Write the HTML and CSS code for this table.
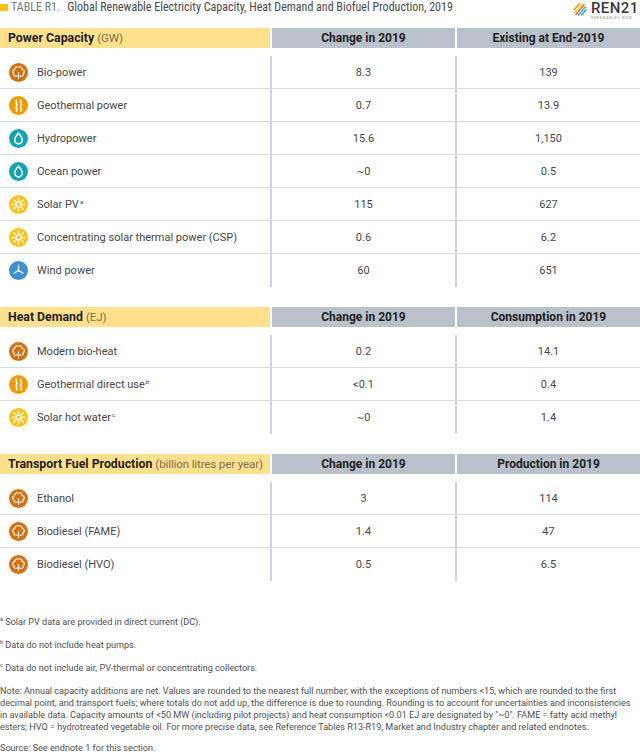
FILE: index.html
```html
<!DOCTYPE html>
<html lang="en">
<head>
<meta charset="utf-8">
<title>Table R1</title>
<link rel="stylesheet" href="styles.css">
</head>
<body>
<svg class="sprite" aria-hidden="true">
  <symbol id="i-bio" viewBox="0 0 20 20">
    <circle cx="10" cy="10" r="10" fill="currentColor"/>
    <path d="M8.6 13.6C6.6 14.7 4.3 13.2 5.2 11.2C3.2 10.5 3.3 7.2 6 7.1C5.9 4.6 8.3 3.5 10 4.2C11.7 3.5 14.1 4.6 14 7.1C16.7 7.2 16.8 10.5 14.8 11.2C15.7 13.2 13.4 14.7 11.4 13.6M10 16.6V10" fill="none" stroke="#fff" stroke-width="1.2" stroke-linecap="round" stroke-linejoin="round"/>
  </symbol>
  <symbol id="i-geo" viewBox="0 0 20 20">
    <circle cx="10" cy="10" r="10" fill="currentColor"/>
    <path d="M7.8 4.4C5.6 6.8 10 7.9 7.8 10.2C5.6 12.5 10 13.5 7.8 15.8M12.6 4.4C10.4 6.8 14.8 7.9 12.6 10.2C10.4 12.5 14.8 13.5 12.6 15.8" fill="none" stroke="#fff" stroke-width="1.7" stroke-linecap="round"/>
  </symbol>
  <symbol id="i-drop" viewBox="0 0 20 20">
    <circle cx="10" cy="10" r="10" fill="currentColor"/>
    <path d="M10 4.2C10 4.2 6 9 6 11.7A4 4 0 0 0 14 11.7C14 9 10 4.2 10 4.2Z" fill="none" stroke="#fff" stroke-width="1.6" stroke-linejoin="round"/>
  </symbol>
  <symbol id="i-sun" viewBox="0 0 20 20">
    <circle cx="10" cy="10" r="10" fill="currentColor"/>
    <circle cx="10" cy="10" r="2.6" fill="none" stroke="#fff" stroke-width="1.6"/>
    <path d="M10 3.3V5.4M10 14.6V16.7M3.3 10H5.4M14.6 10H16.7M13.25 6.75L14.75 5.25M6.75 6.75L5.25 5.25M13.25 13.25L14.75 14.75M6.75 13.25L5.25 14.75" stroke="#fff" stroke-width="1.7" stroke-linecap="round"/>
  </symbol>
  <symbol id="i-wind" viewBox="0 0 20 20">
    <circle cx="10" cy="10" r="10" fill="currentColor"/>
    <g fill="#fff">
      <path d="M10 10C8.9 8 9.1 5.3 10 3.2C10.9 5.3 11.1 8 10 10Z"/>
      <path d="M10 10C8.9 8 9.1 5.3 10 3.2C10.9 5.3 11.1 8 10 10Z" transform="rotate(120 10 10)"/>
      <path d="M10 10C8.9 8 9.1 5.3 10 3.2C10.9 5.3 11.1 8 10 10Z" transform="rotate(240 10 10)"/>
      <circle cx="10" cy="10" r="1.3"/>
    </g>
  </symbol>
</svg>

<header class="top">
  <div class="title">
    <span class="sq"></span>
    <span class="tlabel">TABLE R1.</span>
    <span class="ttext">Global Renewable Electricity Capacity, Heat Demand and Biofuel Production, 2019</span>
  </div>
  <div class="logo">
    <svg class="logo-mark" viewBox="0 0 14 14" aria-hidden="true">
      <path d="M1 8L6 2" stroke="#f39200" stroke-width="1.3" stroke-linecap="round"/>
      <path d="M1.5 11L9 2.5" stroke="#fcc30b" stroke-width="1.3" stroke-linecap="round" stroke-dasharray="3 1.2"/>
      <path d="M3 12.5L11 3" stroke="#e94e1b" stroke-width="1.3" stroke-linecap="round" stroke-dasharray="2.5 1.2"/>
      <path d="M5.5 13L12.5 4.8" stroke="#3b8fd5" stroke-width="1.3" stroke-linecap="round" stroke-dasharray="3 1.2"/>
      <path d="M8.5 13L13 7.8" stroke="#1aa3b4" stroke-width="1.3" stroke-linecap="round"/>
    </svg>
    <div class="brand">
      <span class="ren">REN21</span>
      <span class="now">RENEWABLES NOW</span>
    </div>
  </div>
</header>

<section class="tbl">
  <div class="thead">
    <div class="th th-main"><b>Power Capacity</b> <span class="unit">(GW)</span></div>
    <div class="th">Change in 2019</div>
    <div class="th">Existing at End-2019</div>
  </div>
  <div class="tbody">
    <div class="row"><div class="cell name"><svg class="ic bio"><use href="#i-bio"/></svg><span>Bio-power</span></div><div class="cell num">8.3</div><div class="cell num">139</div></div>
    <div class="row"><div class="cell name"><svg class="ic geo"><use href="#i-geo"/></svg><span>Geothermal power</span></div><div class="cell num">0.7</div><div class="cell num">13.9</div></div>
    <div class="row"><div class="cell name"><svg class="ic hydro"><use href="#i-drop"/></svg><span>Hydropower</span></div><div class="cell num">15.6</div><div class="cell num">1,150</div></div>
    <div class="row"><div class="cell name"><svg class="ic hydro"><use href="#i-drop"/></svg><span>Ocean power</span></div><div class="cell num">~0</div><div class="cell num">0.5</div></div>
    <div class="row"><div class="cell name"><svg class="ic sun"><use href="#i-sun"/></svg><span>Solar PV<sup>a</sup></span></div><div class="cell num">115</div><div class="cell num">627</div></div>
    <div class="row"><div class="cell name"><svg class="ic sun"><use href="#i-sun"/></svg><span>Concentrating solar thermal power (CSP)</span></div><div class="cell num">0.6</div><div class="cell num">6.2</div></div>
    <div class="row"><div class="cell name"><svg class="ic wind"><use href="#i-wind"/></svg><span>Wind power</span></div><div class="cell num">60</div><div class="cell num">651</div></div>
  </div>
</section>

<section class="tbl">
  <div class="thead">
    <div class="th th-main"><b>Heat Demand</b> <span class="unit">(EJ)</span></div>
    <div class="th">Change in 2019</div>
    <div class="th">Consumption in 2019</div>
  </div>
  <div class="tbody">
    <div class="row"><div class="cell name"><svg class="ic bio"><use href="#i-bio"/></svg><span>Modern bio-heat</span></div><div class="cell num">0.2</div><div class="cell num">14.1</div></div>
    <div class="row"><div class="cell name"><svg class="ic geo"><use href="#i-geo"/></svg><span>Geothermal direct use<sup>b</sup></span></div><div class="cell num">&lt;0.1</div><div class="cell num">0.4</div></div>
    <div class="row"><div class="cell name"><svg class="ic sun"><use href="#i-sun"/></svg><span>Solar hot water<sup>c</sup></span></div><div class="cell num">~0</div><div class="cell num">1.4</div></div>
  </div>
</section>

<section class="tbl">
  <div class="thead">
    <div class="th th-main"><b>Transport Fuel Production</b> <span class="unit">(billion litres per year)</span></div>
    <div class="th">Change in 2019</div>
    <div class="th">Production in 2019</div>
  </div>
  <div class="tbody">
    <div class="row"><div class="cell name"><svg class="ic bio"><use href="#i-bio"/></svg><span>Ethanol</span></div><div class="cell num">3</div><div class="cell num">114</div></div>
    <div class="row"><div class="cell name"><svg class="ic bio"><use href="#i-bio"/></svg><span>Biodiesel (FAME)</span></div><div class="cell num">1.4</div><div class="cell num">47</div></div>
    <div class="row"><div class="cell name"><svg class="ic bio"><use href="#i-bio"/></svg><span>Biodiesel (HVO)</span></div><div class="cell num">0.5</div><div class="cell num">6.5</div></div>
  </div>
</section>

<footer class="notes">
  <p><sup>a</sup> Solar PV data are provided in direct current (DC).</p>
  <p><sup>b</sup> Data do not include heat pumps.</p>
  <p><sup>c</sup> Data do not include air, PV-thermal or concentrating collectors.</p>
  <p class="note">Note: Annual capacity additions are net. Values are rounded to the nearest full number, with the exceptions of numbers &lt;15, which are rounded to the first<br>decimal point, and transport fuels; where totals do not add up, the difference is due to rounding. Rounding is to account for uncertainties and inconsistencies<br>in available data. Capacity amounts of &lt;50 MW (including pilot projects) and heat consumption &lt;0.01 EJ are designated by "~0". FAME = fatty acid methyl<br>esters; HVO = hydrotreated vegetable oil. For more precise data, see Reference Tables R13-R19, Market and Industry chapter and related endnotes.</p>
  <p class="source">Source: See endnote 1 for this section.</p>
</footer>
</body>
</html>
```

FILE: styles.css
```css
html, body {
  margin: 0;
  padding: 0;
  overflow: hidden;
}

body {
  width: 640px;
  background: #ffffff;
  color: #474747;
  font-family: Roboto, "Noto Sans", Arial, sans-serif;
  font-size: 11px;
}

.sprite {
  position: absolute;
  width: 0;
  height: 0;
  overflow: hidden;
}

/* ---------- top bar ---------- */
.top {
  height: 28px;
  display: flex;
  justify-content: space-between;
  align-items: flex-start;
}

.title {
  display: flex;
  align-items: center;
  height: 14px;
  font-family: "Roboto Condensed", "DejaVu Sans Condensed", "Liberation Sans Narrow", Roboto, sans-serif;
  font-stretch: condensed;
  font-size: 12px;
  white-space: nowrap;
}

.sq {
  width: 8px;
  height: 7px;
  background: #fcc30b;
  margin-right: 3px;
}

.tlabel {
  color: #7a7a7a;
  margin-right: 7px;
}

.ttext {
  color: #4a4a4a;
}

.logo {
  display: flex;
  align-items: flex-start;
  gap: 4px;
  padding-top: 2px;
}

.logo-mark {
  width: 14px;
  height: 14px;
}

.brand {
  display: flex;
  flex-direction: column;
  width: 49px;
}

.ren {
  font-size: 15px;
  line-height: 12px;
  height: 12px;
  font-weight: 500;
  letter-spacing: 0.4px;
  color: #3a3a3a;
  white-space: nowrap;
}

.now {
  font-size: 3.4px;
  line-height: 4px;
  letter-spacing: 0.8px;
  color: #8a8a8a;
  white-space: nowrap;
  margin-top: 2px;
}

/* ---------- tables ---------- */
.tbl + .tbl {
  margin-top: 20px;
}

.thead,
.row {
  display: grid;
  grid-template-columns: 270px 1fr 1fr;
  column-gap: 2px;
}

.thead {
  height: 20px;
}

.th {
  background: #b9c1ca;
  color: #1f1f1f;
  font-size: 12px;
  font-weight: 700;
  display: flex;
  align-items: center;
  justify-content: center;
}

.th-main {
  display: block;
  background: #ffe08c;
  padding-left: 8px;
  font-weight: 400;
  font-size: 12.3px;
  line-height: 20px;
  white-space: nowrap;
  overflow: hidden;
}

.th-main b {
  font-weight: 700;
}

.unit {
  color: #806f4c;
  font-size: 11.6px;
  letter-spacing: -0.15px;
}

.tbody {
  margin-top: 8px;
}

.row {
  height: 33px;
  box-sizing: border-box;
  background: #cdd4dd;
  border-bottom: 1px solid #d6dce3;
}

.row:last-child {
  border-bottom: none;
}

.cell {
  background: #ffffff;
  display: flex;
  align-items: center;
}

.name {
  padding-left: 9px;
  gap: 9px;
}

.num {
  justify-content: center;
}

.ic {
  width: 19px;
  height: 19px;
  flex: none;
}

.bio { color: #d5700f; }
.geo { color: #f39a00; }
.hydro { color: #14a3b3; }
.sun { color: #fdc20f; }
.wind { color: #3f8fd3; }

sup {
  font-size: 6px;
  line-height: 0;
  vertical-align: 4px;
  margin-left: 1px;
}

/* ---------- notes ---------- */
.notes {
  margin-top: 35px;
  font-size: 9.1px;
  line-height: 12px;
  color: #4f4f4f;
}

.notes p {
  margin: 0 0 11px 0;
}

.notes .note {
  white-space: nowrap;
}

.notes sup {
  font-size: 5.5px;
  margin-left: 0;
}

.notes .source {
  margin-top: -1px;
  line-height: 10px;
  margin-bottom: 0;
}
```
